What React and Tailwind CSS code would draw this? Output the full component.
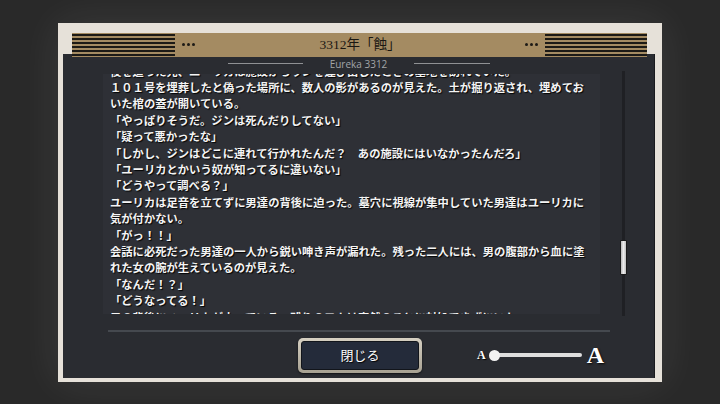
import React from 'react';

const lines = [
  '後を追った先、ユーリカは施設からラジを運び出したときの墓地を訪れていた。',
  '１０１号を埋葬したと偽った場所に、数人の影があるのが見えた。土が掘り返され、埋めてお',
  'いた棺の蓋が開いている。',
  '「やっぱりそうだ。ジンは死んだりしてない」',
  '「疑って悪かったな」',
  '「しかし、ジンはどこに連れて行かれたんだ？　あの施設にはいなかったんだろ」',
  '「ユーリカとかいう奴が知ってるに違いない」',
  '「どうやって調べる？」',
  'ユーリカは足音を立てずに男達の背後に迫った。墓穴に視線が集中していた男達はユーリカに',
  '気が付かない。',
  '「がっ！！」',
  '会話に必死だった男達の一人から鋭い呻き声が漏れた。残った二人には、男の腹部から血に塗',
  'れた女の腕が生えているのが見えた。',
  '「なんだ！？」',
  '「どうなってる！」',
  '男の背後にユーリカが立っている。残りの二人は突然のことに対処できずにいた。',
];

// ヘッダー左右のストライプ
function Stripes({ className }) {
  return (
    <div className={`flex flex-col justify-center gap-[2px] h-full ${className}`}>
      {[0, 1, 2, 3, 4, 5].map((i) => (
        <div key={i} className="h-[2px] bg-[#1c1a16]" />
      ))}
    </div>
  );
}

function Dots() {
  return (
    <div className="flex items-center gap-[2px]">
      <span className="w-[3px] h-[3px] rounded-full bg-[#1c1a16]" />
      <span className="w-[3px] h-[3px] rounded-full bg-[#1c1a16]" />
      <span className="w-[3px] h-[3px] rounded-full bg-[#1c1a16]" />
    </div>
  );
}

export default function App() {
  return (
    <div className="w-[720px] h-[404px] bg-[#292929] flex items-center justify-center overflow-hidden font-['Liberation_Serif','Noto_Sans_CJK_JP',serif]">
      <div className="w-[604px] h-[359px] bg-[#e6e1d9] flex flex-col pl-[5px] pr-[7px] pb-[4px] shadow-[0_0_40px_rgba(255,255,255,0.09)]">
        {/* Header */}
        <div className="relative z-10 pt-[10px] pl-[9px] pr-[8px]">
          <div className="h-[24px] bg-[#a48b62] flex items-center">
            <Stripes className="w-[103px]" />
            <div className="ml-[7px]">
              <Dots />
            </div>
            <div className="flex-1 text-center text-[13.5px] text-[#1a1712] leading-none">3312年「蝕」</div>
            <div className="mr-[7px]">
              <Dots />
            </div>
            <Stripes className="w-[102px]" />
          </div>
        </div>

        {/* Body */}
        <div className="-mt-[3px] flex-1 bg-[#2a2c31] flex flex-col pt-[3px] shadow-[inset_-1px_0_0_#1a1b1e]">
          <div className="h-[14px] flex items-center justify-center gap-[27px]">
            <div className="w-[75px] h-px bg-[#8f9194]" />
            <span className="font-['Open_Sans',sans-serif] text-[10px] text-[#a3a5a8] leading-none">Eureka 3312</span>
            <div className="w-[76px] h-px bg-[#8f9194]" />
          </div>

          <div className="mt-[3px] h-[240px] flex">
            <div className="ml-[40px] w-[497px] h-full bg-[#2e3036] overflow-hidden pl-[7px]">
              <div className="-mt-[11px] font-['Noto_Sans_CJK_JP',sans-serif] font-bold text-[11.3px] leading-[16.4px] text-[#f4f4f4] whitespace-nowrap [text-shadow:1px_1px_1px_rgba(0,0,0,0.95)]">
                {lines.map((l, i) => (
                  <div key={i}>{l}</div>
                ))}
              </div>
            </div>
            <div className="ml-[20px] w-[7px] -mt-[3px] -mb-[2px] relative">
              <div className="absolute inset-y-0 left-[2px] w-[3px] bg-[#1f2024]" />
              <div className="relative mt-[169px] h-[35px] w-[7px] rounded-[1px] border border-[#1a1a1a] bg-[linear-gradient(to_right,#b8b8b8,#ececec,#bdbdbd)]" />
            </div>
          </div>

          <div className="mt-[16px] ml-[45px] w-[502px] h-[2px] bg-[#45494f]" />

          <div className="mt-[6px] h-[35px] flex items-center pl-[235px]">
            <button className="w-[124px] h-[35px] rounded-[5px] p-[3px] bg-[linear-gradient(#d6d0c2,#a7a192)] shadow-[0_1px_2px_rgba(0,0,0,0.6)]">
              <div className="w-full h-full rounded-[3px] border border-[#12151b] bg-[#242b3a] flex items-center justify-center text-[13px] text-white font-['Noto_Sans_CJK_JP',sans-serif] [text-shadow:1px_1px_1px_rgba(0,0,0,0.9)]">
                閉じる
              </div>
            </button>

            <div className="ml-[55px] flex items-center">
              <span className="text-[12px] font-bold text-white leading-none [text-shadow:1px_1px_1px_rgba(0,0,0,0.9)]">A</span>
              <span className="ml-[3px] w-[11px] h-[11px] rounded-full bg-[#f2f2f2] relative z-10" />
              <span className="-ml-[3px] w-[85px] h-[4px] rounded-full bg-[#dedede]" />
              <span className="ml-[5px] text-[24px] font-bold text-white leading-none [text-shadow:1px_1px_2px_rgba(0,0,0,0.9)]">A</span>
            </div>
          </div>
        </div>
      </div>
    </div>
  );
}
